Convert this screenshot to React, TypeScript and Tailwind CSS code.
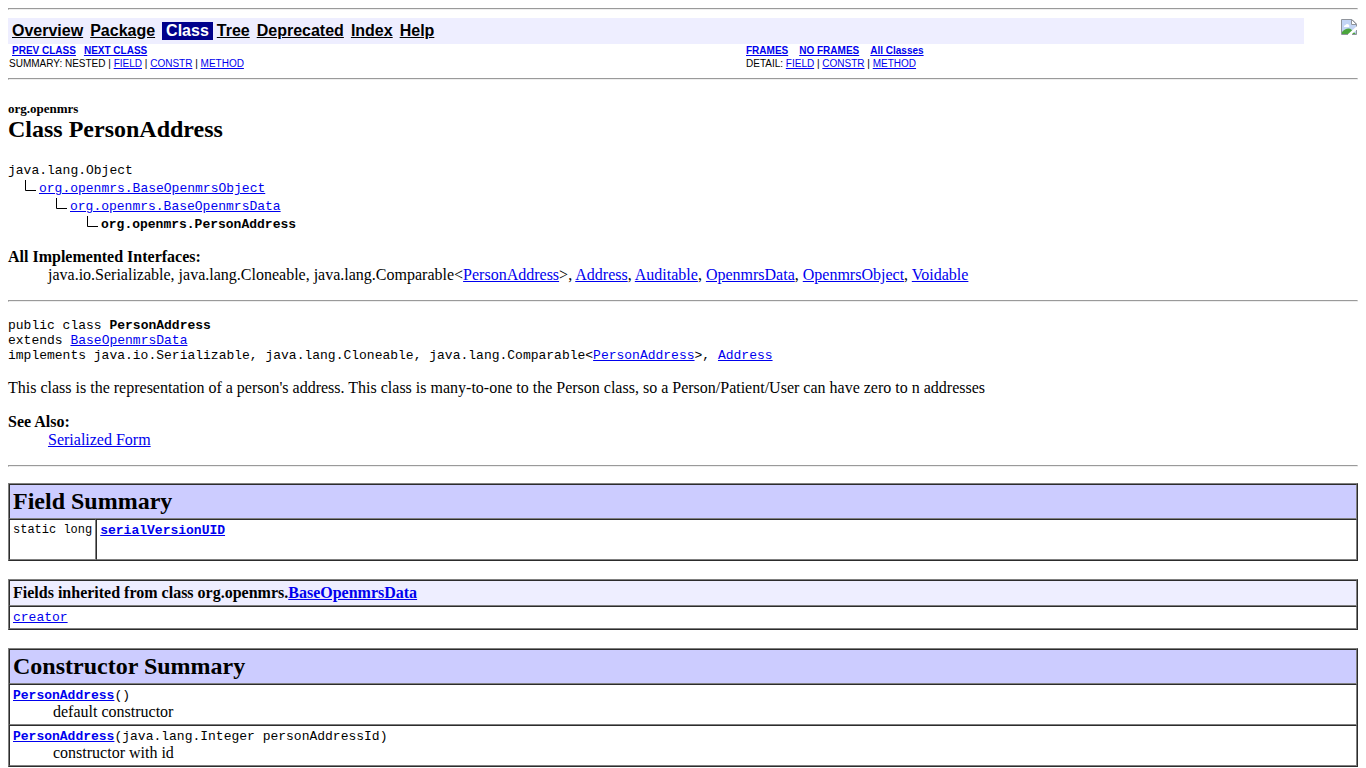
import type { ReactNode } from 'react';

const mono = "font-['Liberation_Mono',monospace]";

function Link({ children, className = '' }: { children: ReactNode; className?: string }) {
  return (
    <a href="#" className={`text-[#0000ee] underline ${className}`}>
      {children}
    </a>
  );
}

function Rule() {
  return <hr className="h-0.5 border border-[#9a9a9a] border-b-[#eeeeee] border-r-[#eeeeee]" />;
}

function BrokenImage() {
  return (
    <svg className="mt-px mr-px" width="16" height="16" viewBox="0 0 16 16" role="img" aria-label="Logo">
      <path d="M1 1H10.5V5.5H15V15H1Z" fill="#c3d5f5" />
      <path d="M3 7.5a1.500 1.500 0 0 1 1.500-1.500 2 2 0 0 1 3.500 0 1.500 1.500 0 0 1 0 2H3Z" fill="#fff" />
      <path d="M1 15V13C3 11 5 9.500 7.500 9.500S11 11 12 12.500L15 15Z" fill="#4ba53c" />
      <path d="M16 7V10.500L10 16H6Z" fill="#fff" />
      <path d="M15.500 7.500V5L11 0.500H0.500V15.500H7M15.500 11V15.500H11" fill="none" stroke="#8f949c" />
      <path d="M10.500 0.500V5.500H15.500Z" fill="#fff" stroke="#8f949c" />
    </svg>
  );
}

const cell = 'border border-t-[#2c2c2c] border-l-[#2c2c2c] border-b-[#808080] border-r-[#808080] p-[3px] text-left align-top';
const table = 'w-full border-separate border-spacing-0 border border-[#2c2c2c] border-t-[#808080] border-l-[#808080]';

const tabs = ['Tree', 'Deprecated', 'Index', 'Help'];

const ancestors = [
  { name: 'org.openmrs.BaseOpenmrsObject', indent: 'pl-4', current: false },
  { name: 'org.openmrs.BaseOpenmrsData', indent: 'pl-[47px]', current: false },
  { name: 'org.openmrs.PersonAddress', indent: 'pl-[78px]', current: true },
];

const interfaces = ['Address', 'Auditable', 'OpenmrsData', 'OpenmrsObject', 'Voidable'];

function MemberLinks({ label, className = '' }: { label: string; className?: string }) {
  return (
    <p className={className}>
      {label} <Link>FIELD</Link> | <Link>CONSTR</Link> | <Link>METHOD</Link>
    </p>
  );
}

function NavBar() {
  return (
    <header className="font-['Liberation_Sans',Arial,sans-serif]">
      <div className="flex items-start justify-between pt-2">
        <nav className="flex w-[96%] bg-[#eeeeff] px-1 py-1 text-base leading-[18px] font-bold">
          <a href="#" className="underline">Overview</a>
          <a href="#" className="ml-[7px] underline">Package</a>
          <span className="ml-[7px] bg-[#00008b] px-1 text-white">Class</span>
          <span className="ml-1 flex gap-[7px]">
            {tabs.map((t) => (
              <a key={t} href="#" className="underline">
                {t}
              </a>
            ))}
          </span>
        </nav>
        <BrokenImage />
      </div>
      <div className="grid grid-cols-[737px_1fr] pb-2 text-[10px] leading-[13px]">
        <div>
          <p className="flex gap-2 pl-1 font-bold">
            <Link>PREV CLASS</Link>
            <Link>NEXT CLASS</Link>
          </p>
          <MemberLinks label="SUMMARY: NESTED |" className="pl-px" />
        </div>
        <div>
          <p className="flex gap-[11px] pl-px font-bold">
            <Link>FRAMES</Link>
            <Link>NO FRAMES</Link>
            <Link>All Classes</Link>
          </p>
          <MemberLinks label="DETAIL:" className="pl-px" />
        </div>
      </div>
    </header>
  );
}

export default function App() {
  return (
    <div className="bg-white p-2 font-['Liberation_Serif',serif] text-base leading-[18px] text-black">
      <Rule />
      <NavBar />
      <Rule />
      <main>
        <h1 className="mt-[21px] text-2xl leading-[27px] font-bold">
          <span className="block text-[13px] leading-[15px]">org.openmrs</span>
          Class PersonAddress
        </h1>
        <div className={`mt-[19px] text-[13px] ${mono}`}>
          <p>java.lang.Object</p>
          {ancestors.map((a) => (
            <div key={a.name} className={`flex ${a.indent}`}>
              <svg className="mr-[3px]" width="12" height="18" viewBox="0 0 12 18" aria-hidden="true">
                <path d="M1.5 0V10.5H12" fill="none" stroke="#000" />
              </svg>
              {a.current ? <b>{a.name}</b> : <Link>{a.name}</Link>}
            </div>
          ))}
        </div>
        <dl className="mt-[14px] mb-4">
          <dt className="font-bold">All Implemented Interfaces:</dt>
          <dd className="ml-10">
            java.io.Serializable, java.lang.Cloneable, java.lang.Comparable&lt;<Link>PersonAddress</Link>&gt;
            {interfaces.map((i) => (
              <span key={i}>
                , <Link>{i}</Link>
              </span>
            ))}
          </dd>
        </dl>
        <Rule />
        <div className={`mt-4 text-[13px] leading-[15px] ${mono}`}>
          <p>public class <b>PersonAddress</b></p>
          <p>extends <Link>BaseOpenmrsData</Link></p>
          <p>
            implements java.io.Serializable, java.lang.Cloneable, java.lang.Comparable&lt;<Link>PersonAddress</Link>&gt;,{' '}
            <Link>Address</Link>
          </p>
        </div>
        <p className="mt-4">
          This class is the representation of a person's address. This class is many-to-one to the Person class, so a
          Person/Patient/User can have zero to n addresses
        </p>
        <dl className="my-4">
          <dt className="font-bold">See Also:</dt>
          <dd className="ml-10">
            <Link>Serialized Form</Link>
          </dd>
        </dl>
        <Rule />

        <table className={`mt-4 ${table}`}>
          <thead>
            <tr className="bg-[#ccccff]">
              <th colSpan={2} className={`text-2xl leading-[27px] ${cell}`}>Field Summary</th>
            </tr>
          </thead>
          <tbody>
            <tr>
              <td className={`w-px text-xs leading-[15px] whitespace-nowrap ${mono} ${cell}`}>static long</td>
              <td className={`h-[41px] text-[13px] leading-[15px] ${mono} ${cell}`}>
                <Link className="font-bold">serialVersionUID</Link>
              </td>
            </tr>
          </tbody>
        </table>

        <table className={`mt-[18px] ${table}`}>
          <thead>
            <tr className="bg-[#eeeeff]">
              <th className={cell}>
                Fields inherited from class org.openmrs.<Link>BaseOpenmrsData</Link>
              </th>
            </tr>
          </thead>
          <tbody>
            <tr>
              <td className={`text-[13px] leading-[15px] ${mono} ${cell}`}>
                <Link>creator</Link>
              </td>
            </tr>
          </tbody>
        </table>

        <table className={`mt-[18px] ${table}`}>
          <thead>
            <tr className="bg-[#ccccff]">
              <th className={`text-2xl leading-[27px] ${cell}`}>Constructor Summary</th>
            </tr>
          </thead>
          <tbody>
            {[
              { args: '()', text: 'default constructor' },
              { args: '(java.lang.Integer personAddressId)', text: 'constructor with id' },
            ].map((c) => (
              <tr key={c.args}>
                <td className={cell}>
                  <p className={`text-[13px] leading-[15px] ${mono}`}>
                    <Link className="font-bold">PersonAddress</Link>
                    {c.args}
                  </p>
                  <p className="pl-10">{c.text}</p>
                </td>
              </tr>
            ))}
          </tbody>
        </table>
      </main>
    </div>
  );
}
